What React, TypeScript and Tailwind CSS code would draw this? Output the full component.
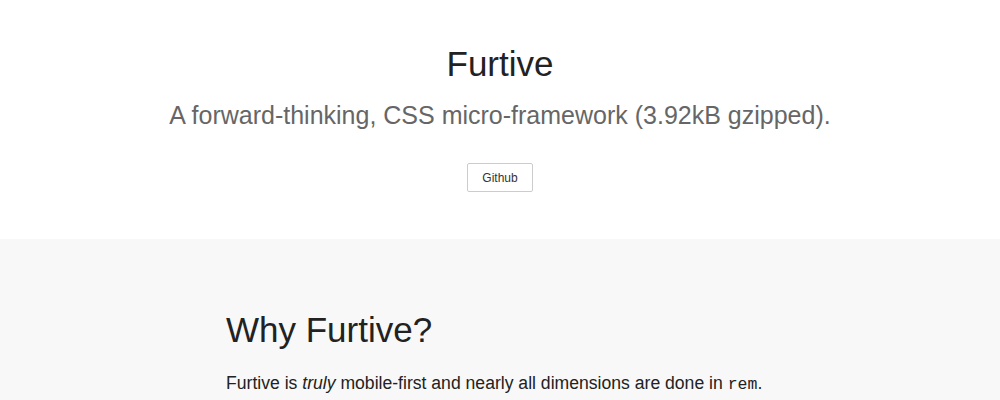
export default function App() {
  return (
    <div className="min-h-[400px] bg-white font-['Liberation_Sans',Arial,sans-serif] text-[#222]">
      <header className="flex flex-col items-center pt-[41px] pb-[47px] bg-white">
        <h1 className="text-[35px] leading-[46px] text-[#222]">Furtive</h1>
        <p className="mt-[12px] text-[25px] leading-[32px] text-[#666]">
          A forward-thinking, CSS micro-framework (3.92kB gzipped).
        </p>
        <a
          href="#"
          className="mt-[32px] w-[66px] h-[29px] flex items-center justify-center border border-[#ccc] rounded-[2px] text-[12px] text-[#333]"
        >
          Github
        </a>
      </header>
      <section className="bg-[#f8f8f8] pt-[68px] pb-[40px]">
        <div className="w-[548px] mx-auto">
          <h2 className="text-[35px] leading-[46px] text-[#222]">Why Furtive?</h2>
          <p className="mt-[18px] text-[17.6px] leading-[24px] text-[#222] whitespace-nowrap">
            Furtive is <em>truly</em> mobile-first and nearly all dimensions are done in{' '}
            <code className="font-['Liberation_Mono',monospace] text-[16.5px]">rem</code>.
          </p>
        </div>
      </section>
    </div>
  );
}
